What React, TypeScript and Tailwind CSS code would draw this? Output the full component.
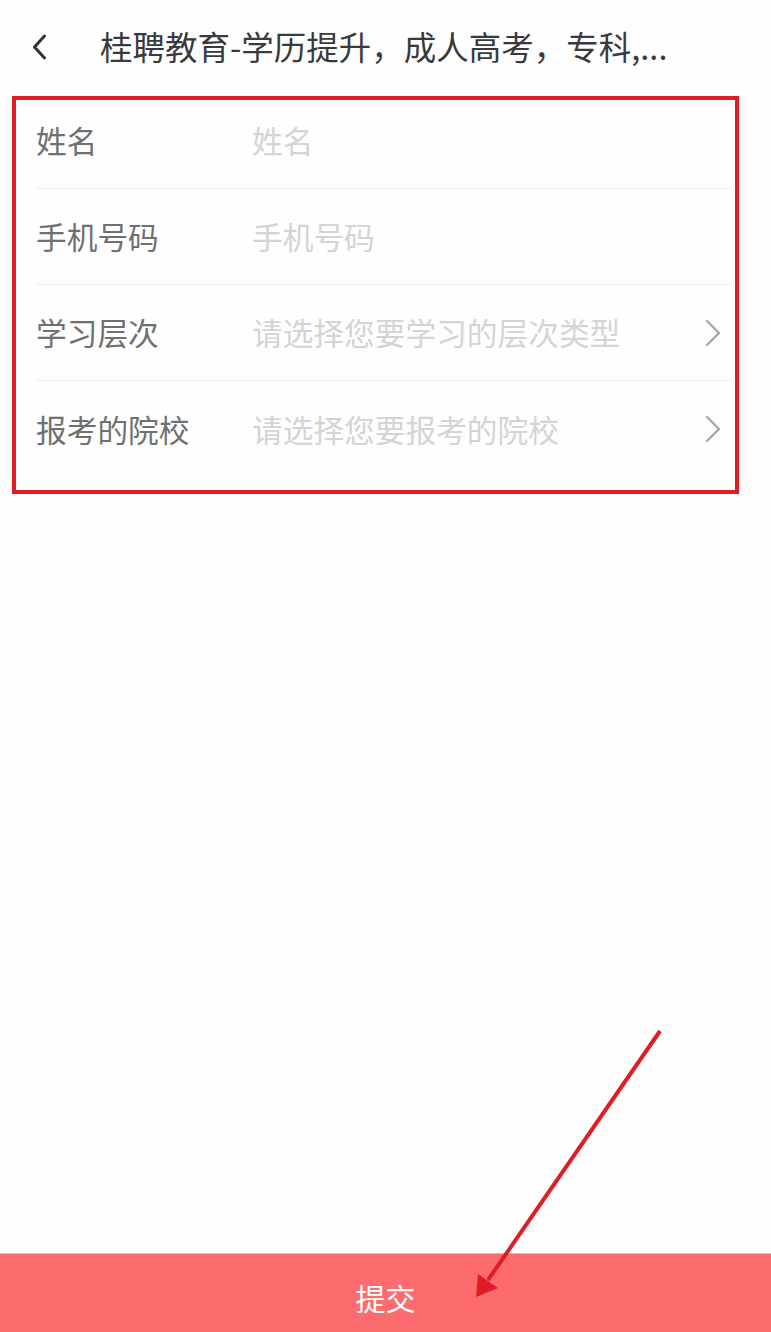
import React from "react";

const font = { fontFamily: '"Noto Sans CJK SC", "Noto Sans", sans-serif' };

function Chevron({ className }: { className?: string }) {
  return (
    <svg viewBox="0 0 16 28" className={className} fill="none">
      <path d="M2 2 L14 14 L2 26" stroke="currentColor" strokeWidth="2.4" strokeLinecap="round" strokeLinejoin="round" />
    </svg>
  );
}

const rows = [
  { label: "姓名", placeholder: "姓名", arrow: false },
  { label: "手机号码", placeholder: "手机号码", arrow: false },
  { label: "学习层次", placeholder: "请选择您要学习的层次类型", arrow: true },
  { label: "报考的院校", placeholder: "请选择您要报考的院校", arrow: true },
];

export default function App() {
  return (
    <div className="relative w-[771px] h-[1332px] bg-[#fefefe] flex flex-col overflow-hidden" style={font}>
      <header className="h-[93px] flex items-center shrink-0">
        <div className="w-[100px] flex items-center pl-[31px]">
          <svg viewBox="0 0 16 26" className="w-[17px] h-[26px] text-[#333]" fill="none">
            <path d="M13 2 L3 13 L13 24" stroke="currentColor" strokeWidth="3" strokeLinecap="round" strokeLinejoin="round" />
          </svg>
        </div>
        <h1 className="text-[32.5px] text-[#3a3a3a] leading-none whitespace-nowrap">桂聘教育-学历提升，成人高考，专科,...</h1>
      </header>

      <div className="flex flex-col">
        {rows.map((r) => (
          <div key={r.label} className="ml-[36px] mr-[38px] h-[96px] flex items-center border-b border-[#efefef] last:border-b-0">
            <div className="w-[216px] text-[30.7px] text-[#707070] leading-none">{r.label}</div>
            <div className="flex-1 text-[30.7px] text-[#d4d4d4] leading-none">{r.placeholder}</div>
            {r.arrow && <Chevron className="w-[16px] h-[28px] text-[#a8a8a8] mr-[12px]" />}
          </div>
        ))}
      </div>

      <div className="flex-1" />

      <button className="h-[79px] w-full bg-[#fc6b6e] text-white text-[30px] leading-none flex items-center justify-center pt-[7px] border-t border-[#f7b3b4]">
        提交
      </button>

      <div className="absolute left-[12px] top-[96px] w-[727px] h-[398px] border-4 border-[#e01d25] pointer-events-none" />

      <svg className="absolute left-0 top-0 w-[771px] h-[1332px] pointer-events-none" viewBox="0 0 771 1332">
        <line x1="660" y1="1031" x2="488" y2="1280" stroke="#e01d25" strokeWidth="4" />
        <polygon points="476,1297 478,1274 498,1288" fill="#e01d25" />
      </svg>
    </div>
  );
}
